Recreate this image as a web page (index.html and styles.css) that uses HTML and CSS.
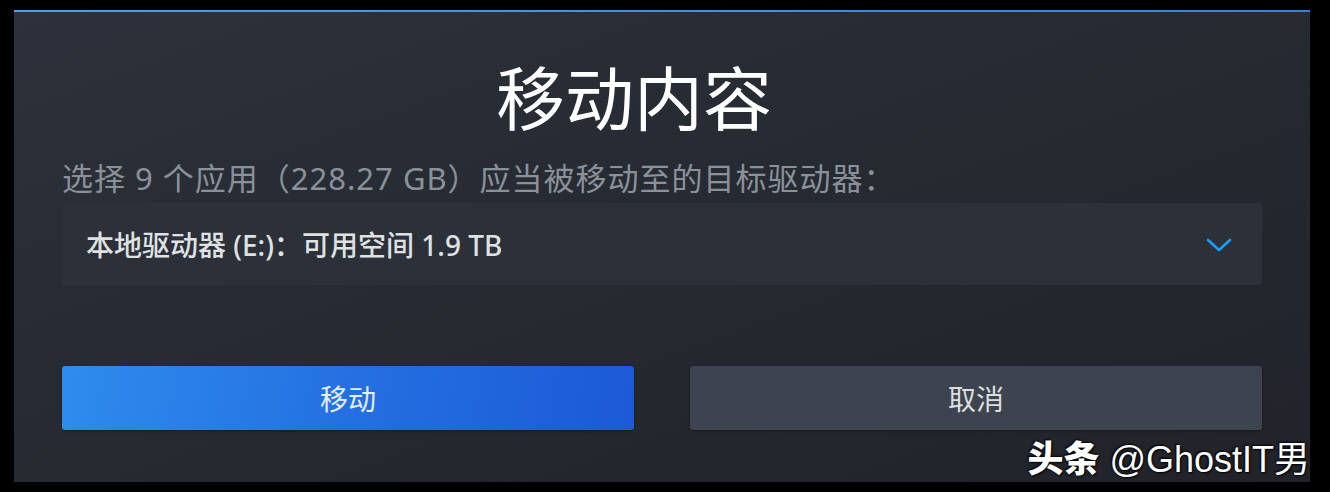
FILE: index.html
```html
<!DOCTYPE html>
<html lang="zh-CN">
<head>
    <meta charset="UTF-8">
    <meta name="viewport" content="width=device-width, initial-scale=1.0">
    <title>移动内容</title>
    <link rel="stylesheet" href="styles.css">
</head>
<body>

    <div class="dialog">
        <h1 class="title">移动内容</h1>
        <div class="prompt">选择 9 个应用（228.27 GB）应当被移动至的目标驱动器：</div>

        <div class="dropdown">
            <span class="drive">本地驱动器 (E:)：可用空间 1.9 TB</span>
            <svg class="chevron" width="26" height="16" viewBox="0 0 26 16">
                <path d="M2 3 L13 13 L24 3" fill="none" stroke="#1a9fff" stroke-width="2.6" stroke-linecap="round" stroke-linejoin="round"/>
            </svg>
        </div>

        <div class="actions">
            <button class="btn primary">移动</button>
            <button class="btn">取消</button>
        </div>
    </div>

    <div class="watermark"><b>头条</b> @GhostIT男</div>

</body>
</html>
```

FILE: styles.css
```css
body {
    margin: 0;
    width: 1330px;
    height: 492px;
    background-color: #000;
    font-family: 'Noto Sans', 'Noto Sans CJK SC', sans-serif;
    overflow: hidden;
    position: relative;
}
.dialog {
    box-sizing: border-box;
    width: 1296px;
    height: 472px;
    margin: 10px 0 0 14px;
    padding: 0 48px;
    border-top: 2px solid #3d8fdc;
    border-image: linear-gradient(90deg, #46a3e6, #3d7fd8) 1;
    background: linear-gradient(160deg, #2c313b 0%, #252930 55%, #212329 100%);
}
.title {
    margin: 0;
    padding: 40px 56px 0 0;
    text-align: center;
    font-size: 69px;
    font-weight: normal;
    line-height: 92px;
    color: #fff;
}
.prompt {
    margin-top: 14px;
    font-size: 31px;
    letter-spacing: 1px;
    line-height: 40px;
    color: #8b9199;
}
.dropdown {
    display: flex;
    align-items: center;
    justify-content: space-between;
    height: 82px;
    margin-top: 5px;
    padding: 0 30px 0 24px;
    background-color: #2c3039;
    border-radius: 4px;
}
.drive {
    font-size: 28px;
    font-weight: 500;
    color: #dfe1e3;
}
.chevron {
    margin-top: 2px;
}
.actions {
    display: flex;
    gap: 56px;
    margin-top: 81px;
}
.btn {
    flex: 1;
    height: 64px;
    border: none;
    border-radius: 3px;
    background-color: #3d4450;
    color: #dcdedf;
    font-family: inherit;
    font-size: 28px;
    box-shadow: 0 1px 3px rgba(0, 0, 0, 0.35);
}
.btn.primary {
    background: linear-gradient(100deg, #2f8ced 0%, #2470e2 50%, #1c59d6 100%);
    color: #e6eef9;
}
.watermark {
    position: absolute;
    right: 20px;
    top: 430px;
    font-family: 'Liberation Sans', 'Noto Sans CJK SC', sans-serif;
    font-size: 36px;
    color: #fff;
    text-shadow: 1px 1px 2px #000, -1px -1px 2px #000;
}
.watermark b {
    font-weight: 900;
}
```
